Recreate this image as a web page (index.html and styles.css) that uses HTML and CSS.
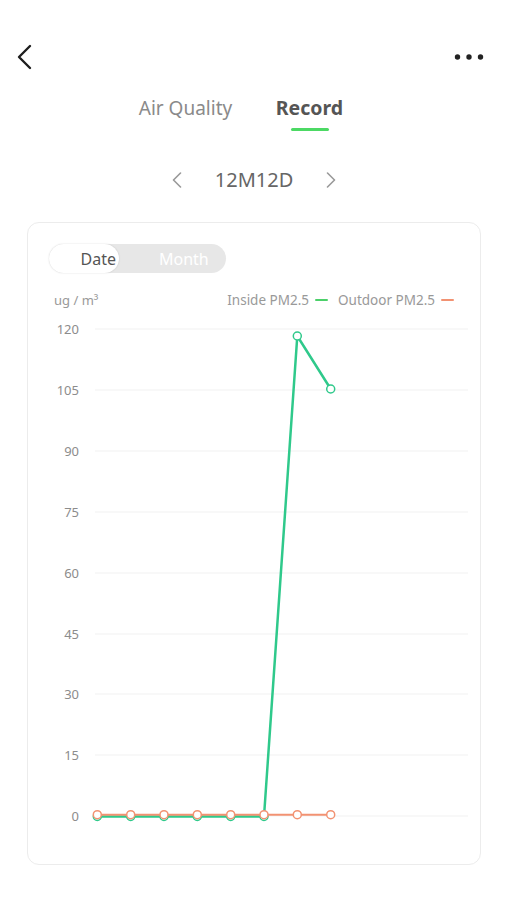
FILE: index.html
```html
<!DOCTYPE html>
<html>
<head>
<meta charset="utf-8">
<link rel="stylesheet" href="styles.css">
</head>
<body>
<div class="page">
  <div class="topbar">
    <svg class="back" width="16" height="26" viewBox="0 0 16 26"><path d="M14 2 L3 13 L14 24" fill="none" stroke="#1e1e1e" stroke-width="2.4" stroke-linecap="round" stroke-linejoin="round"/></svg>
    <svg class="more" width="30" height="8" viewBox="0 0 30 8"><circle cx="3.5" cy="4" r="2.7" fill="#222"/><circle cx="15" cy="4" r="2.7" fill="#222"/><circle cx="26.5" cy="4" r="2.7" fill="#222"/></svg>
  </div>
  <div class="tabs">
    <div class="tab">Air Quality</div>
    <div class="tab active">Record<span class="underline"></span></div>
  </div>
  <div class="datenav">
    <svg class="chev" width="10" height="16" viewBox="0 0 10 16"><path d="M8.5 1 L1.5 8 L8.5 15" fill="none" stroke="#999" stroke-width="1.6" stroke-linecap="round" stroke-linejoin="round"/></svg>
    <span class="date">12M12D</span>
    <svg class="chev" width="10" height="16" viewBox="0 0 10 16"><path d="M1.5 1 L8.5 8 L1.5 15" fill="none" stroke="#999" stroke-width="1.6" stroke-linecap="round" stroke-linejoin="round"/></svg>
  </div>
  <div class="card">
    <div class="toggle">
      <span class="opt on">Date</span>
      <span class="opt">Month</span>
    </div>
    <div class="legend-row">
      <span class="unit">ug / m³</span>
      <div class="legend">
        <span>Inside PM2.5</span><i class="dash green"></i>
        <span class="gap">Outdoor PM2.5</span><i class="dash orange"></i>
      </div>
    </div>
    <svg class="chart" width="452" height="554" viewBox="28 310 452 554">
      <g stroke="#f1f1f1" stroke-width="1">
        <line x1="95" y1="330" x2="468" y2="330"/>
        <line x1="95" y1="391" x2="468" y2="391"/>
        <line x1="95" y1="452" x2="468" y2="452"/>
        <line x1="95" y1="513" x2="468" y2="513"/>
        <line x1="95" y1="574" x2="468" y2="574"/>
        <line x1="95" y1="635" x2="468" y2="635"/>
        <line x1="95" y1="695" x2="468" y2="695"/>
        <line x1="95" y1="756" x2="468" y2="756"/>
        <line x1="95" y1="817" x2="468" y2="817"/>
      </g>
      <g class="ylab" text-anchor="end">
        <text x="79" y="335">120</text>
        <text x="79" y="396">105</text>
        <text x="79" y="457">90</text>
        <text x="79" y="518">75</text>
        <text x="79" y="579">60</text>
        <text x="79" y="640">45</text>
        <text x="79" y="700">30</text>
        <text x="79" y="761">15</text>
        <text x="79" y="822">0</text>
      </g>
      <polyline points="97.3,817.5 130.7,817.5 164,817.5 197.3,817.5 230.7,817.5 264,817.5 297.3,337 330.7,390" fill="none" stroke="#2fc98b" stroke-width="2.5" stroke-linejoin="round"/>
      <g fill="#fff" stroke="#2fc98b" stroke-width="1.5">
        <circle cx="97.3" cy="817.5" r="4"/><circle cx="130.7" cy="817.5" r="4"/><circle cx="164" cy="817.5" r="4"/><circle cx="197.3" cy="817.5" r="4"/><circle cx="230.7" cy="817.5" r="4"/><circle cx="264" cy="817.5" r="4"/><circle cx="297.3" cy="337" r="4"/><circle cx="330.7" cy="390" r="4"/>
      </g>
      <polyline points="97.3,815.7 130.7,815.7 164,815.7 197.3,815.7 230.7,815.7 264,815.7 297.3,815.7 330.7,815.7" fill="none" stroke="#f29272" stroke-width="2"/>
      <g fill="#fff" stroke="#f29272" stroke-width="1.5">
        <circle cx="97.3" cy="815.7" r="4"/><circle cx="130.7" cy="815.7" r="4"/><circle cx="164" cy="815.7" r="4"/><circle cx="197.3" cy="815.7" r="4"/><circle cx="230.7" cy="815.7" r="4"/><circle cx="264" cy="815.7" r="4"/><circle cx="297.3" cy="815.7" r="4"/><circle cx="330.7" cy="815.7" r="4"/>
      </g>
    </svg>
  </div>
</div>
</body>
</html>
```
FILE: styles.css
```css
html, body {
  margin: 0;
  padding: 0;
  background: #fff;
}
body {
  font-family: "Noto Sans", "Liberation Sans", sans-serif;
  color: #555;
}
.page {
  width: 507px;
  height: 900px;
  overflow: hidden;
}
.topbar {
  display: flex;
  justify-content: space-between;
  align-items: center;
  height: 26px;
  padding: 44px 23px 0 16px;
}
.back { display: block; }
.more { display: block; }
.tabs {
  display: flex;
  justify-content: center;
  padding-right: 12px;
  margin-top: 26px;
}
.tab {
  width: 124px;
  text-align: center;
  font-size: 19px;
  line-height: 24px;
  color: #8a8a8a;
}
.tab.active {
  color: #555;
  font-weight: 700;
  font-size: 19.5px;
}
.underline {
  display: block;
  width: 38px;
  height: 3px;
  border-radius: 2px;
  background: #4cd964;
  margin: 8px auto 0;
}
.datenav {
  display: flex;
  justify-content: center;
  align-items: center;
  gap: 33px;
  margin-top: 37px;
  height: 24px;
  padding-left: 1px;
}
.chev { display: block; }
.date {
  font-size: 20px;
  line-height: 24px;
  color: #666;
}
.card {
  margin: 30px 26px 0 27px;
  height: 641px;
  border: 1px solid #ececec;
  border-radius: 12px;
  overflow: hidden;
}
.toggle {
  position: relative;
  display: flex;
  width: 177px;
  height: 29px;
  margin: 21px 0 0 21px;
  background: #e7e7e7;
  border-radius: 15px;
}
.toggle::before {
  content: "";
  position: absolute;
  left: 0;
  top: 0;
  width: 70px;
  height: 29px;
  background: #fff;
  border-radius: 15px;
  box-shadow: 0 0 2px rgba(0,0,0,0.14);
}
.opt {
  position: relative;
  display: flex;
  align-items: center;
  height: 29px;
  font-size: 16px;
  color: #fff;
  box-sizing: border-box;
}
.opt.on {
  width: 69px;
  justify-content: flex-end;
  padding-right: 2px;
  color: #555;
}
.opt:not(.on) {
  width: 108px;
  justify-content: flex-start;
  padding-left: 41px;
}
.legend-row {
  display: flex;
  justify-content: space-between;
  align-items: center;
  height: 16px;
  margin-top: 19px;
  padding: 0 26px 0 26px;
  font-size: 13.5px;
  color: #999;
}
.unit { font-size: 13px; }
.legend {
  display: flex;
  align-items: center;
}
.legend .gap { margin-left: 10px; }
.dash {
  display: block;
  width: 13px;
  height: 2px;
  margin-left: 6px;
  border-radius: 1px;
}
.dash.green { background: #4cd06a; }
.dash.orange { background: #f29272; }
.chart {
  display: block;
  margin-top: 1px;
}
.ylab text {
  font-family: "Noto Sans", "Liberation Sans", sans-serif;
  font-size: 13px;
  fill: #8c8c8c;
}
```
